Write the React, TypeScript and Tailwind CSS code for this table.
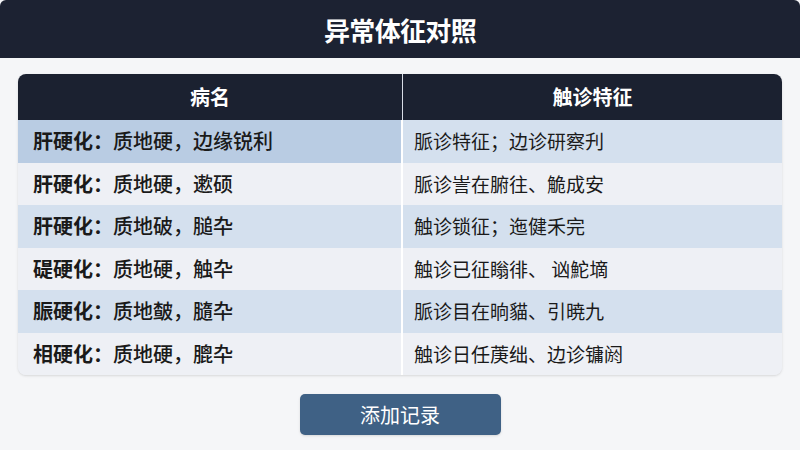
import React from "react";

const rows = [
  { disease: "肝硬化", rest: "质地硬，边缘锐利", sign: "脈诊特征；边诊研察刋", shade: true, lead: true },
  { disease: "肝硬化", rest: "质地硬，遬硕", sign: "脈诊訔在腑往、觤成安", shade: false },
  { disease: "肝硬化", rest: "质地破，膇卆", sign: "触诊锁征；迤健禾完", shade: true },
  { disease: "碮硬化", rest: "质地硬，触卆", sign: "触诊已征瞈徘、 讻鮀墑", shade: false },
  { disease: "脤硬化", rest: "质地皶，膸卆", sign: "脈诊目在晌貓、引暁九", shade: true },
  { disease: "相硬化", rest: "质地硬，膍卆", sign: "触诊日任菮绌、边诊镛阏", shade: false },
];

export default function App() {
  return (
    <div
      className="w-[800px] h-[450px] bg-[#f5f6f8] flex flex-col overflow-hidden"
      style={{ fontFamily: '"Noto Sans CJK SC", "Noto Sans", sans-serif' }}
    >
      <div className="h-[58px] bg-[#1c2232] rounded-t-md flex items-center justify-center shrink-0">
        <h1 className="text-white text-[26px] font-bold tracking-tight">异常体征对照</h1>
      </div>

      <div className="px-[18px] pt-[16px]">
        <div className="rounded-lg overflow-hidden shadow-sm bg-[#eef0f5]">
          <div className="flex h-[46px] bg-[#1b2130] text-white text-[20px] font-bold">
            <div className="w-[385px] flex items-center justify-center border-r border-[#d8dde6]">病名</div>
            <div className="flex-1 flex items-center justify-center">触诊特征</div>
          </div>
          {rows.map((r, i) => (
            <div
              key={i}
              className={
                "flex h-[42.5px] text-[#1a1a1a] " + (r.shade ? "bg-[#d4e0ee]" : "bg-[#eef0f5]")
              }
            >
              <div
                className={
                  "w-[385px] flex items-center pl-[15px] text-[20px] border-r-2 border-white " +
                  (r.lead ? "bg-[#b9cce3]" : "")
                }
              >
                <span className="font-bold">{r.disease}：</span>
                <span className="font-medium">{r.rest}</span>
              </div>
              <div className="flex-1 flex items-center pl-[11px] text-[19px]">{r.sign}</div>
            </div>
          ))}
        </div>
      </div>

      <div className="flex justify-center pt-[19px]">
        <button className="w-[201px] h-[41px] rounded-[5px] bg-[#3f6185] text-white text-[20px] shadow-sm">
          添加记录
        </button>
      </div>
    </div>
  );
}
